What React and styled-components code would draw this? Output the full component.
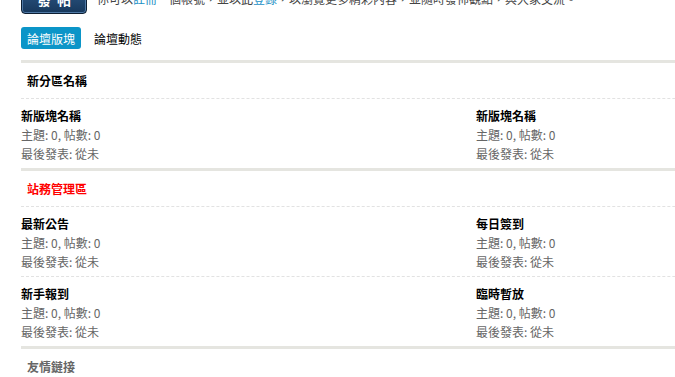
import React from "react";
import styled, { createGlobalStyle } from "styled-components";

const GlobalStyle = createGlobalStyle`
  body {
    margin: 0;
    overflow: hidden;
    background: #fff;
    font-family: "Noto Sans CJK TC", "Noto Sans", sans-serif;
    font-size: 12px;
    color: #333;
  }
`;

const Page = styled.div`
  width: 960px;
  margin-top: -16px;
  padding-left: 21px;
`;

const TopBar = styled.div`
  display: flex;
  align-items: center;
  gap: 10px;
  height: 30px;
`;

const PostButton = styled.button`
  width: 66px;
  height: 30px;
  border: 1px solid #0d1f33;
  border-radius: 4px;
  background: linear-gradient(#2f5b8b, #17385c);
  box-shadow: inset 0 0 0 1px #4f79a6;
  color: #fff;
  font-family: inherit;
  font-size: 14px;
  font-weight: bold;
  letter-spacing: 6px;
  padding: 0 0 0 6px;
`;

const Intro = styled.p`
  margin: 0;
  line-height: 16px;
  color: #444;
`;

const Link = styled.a`
  color: #1a8fc5;
  text-decoration: none;
`;

const Tabs = styled.div`
  display: flex;
  align-items: center;
  gap: 7px;
  margin-top: 13px;
  height: 22px;
`;

const Tab = styled.span`
  display: inline-flex;
  align-items: center;
  height: 22px;
  padding: 0 6px;
  border-radius: 3px;
  background: ${(p) => (p.$active ? "#0b95c8" : "transparent")};
  color: ${(p) => (p.$active ? "#fff" : "#000")};
`;

const Sections = styled.div`
  margin-top: 11px;
`;

const Section = styled.section`
  border-top: 3px solid #e5e5e0;
`;

const SectionHead = styled.h2`
  margin: 0;
  height: 35px;
  line-height: 35px;
  padding-left: 6px;
  font-size: 12px;
  font-weight: bold;
  color: ${(p) => p.$color || "#000"};
  border-bottom: ${(p) => (p.$empty ? "none" : "1px dashed #e2e2e2")};
`;

const Row = styled.div`
  display: grid;
  grid-template-columns: 455px 455px;
  padding: 7px 0 5px;
  border-bottom: ${(p) => (p.$last ? "none" : "1px dashed #e2e2e2")};
`;

const Forum = styled.div`
  line-height: 19px;
`;

const ForumName = styled.div`
  font-weight: bold;
  color: #000;
`;

const Meta = styled.div`
  color: #666;
`;

const sections = [
  {
    title: "新分區名稱",
    rows: [["新版塊名稱", "新版塊名稱"]],
  },
  {
    title: "站務管理區",
    color: "#f00",
    rows: [
      ["最新公告", "每日簽到"],
      ["新手報到", "臨時暫放"],
    ],
  },
  { title: "友情鏈接", color: "#666", rows: [] },
];

const App = () => {
  return (
    <>
      <GlobalStyle />
      <Page>
        <TopBar>
          <PostButton>發帖</PostButton>
          <Intro>
            你可以<Link href="#">註冊</Link>一個帳號，並以此<Link href="#">登錄</Link>
            ，以瀏覽更多精彩內容，並隨時發佈觀點，與大家交流。
          </Intro>
        </TopBar>
        <Tabs>
          <Tab $active>論壇版塊</Tab>
          <Tab>論壇動態</Tab>
        </Tabs>
        <Sections>
          {sections.map((s) => (
            <Section key={s.title}>
              <SectionHead $color={s.color} $empty={!s.rows.length}>
                {s.title}
              </SectionHead>
              {s.rows.map((r, i) => (
                <Row key={i} $last={i === s.rows.length - 1}>
                  {r.map((name) => (
                    <Forum key={name + i}>
                      <ForumName>{name}</ForumName>
                      <Meta>主題: 0, 帖數: 0</Meta>
                      <Meta>最後發表: 從未</Meta>
                    </Forum>
                  ))}
                </Row>
              ))}
            </Section>
          ))}
        </Sections>
      </Page>
    </>
  );
};

export default App;
